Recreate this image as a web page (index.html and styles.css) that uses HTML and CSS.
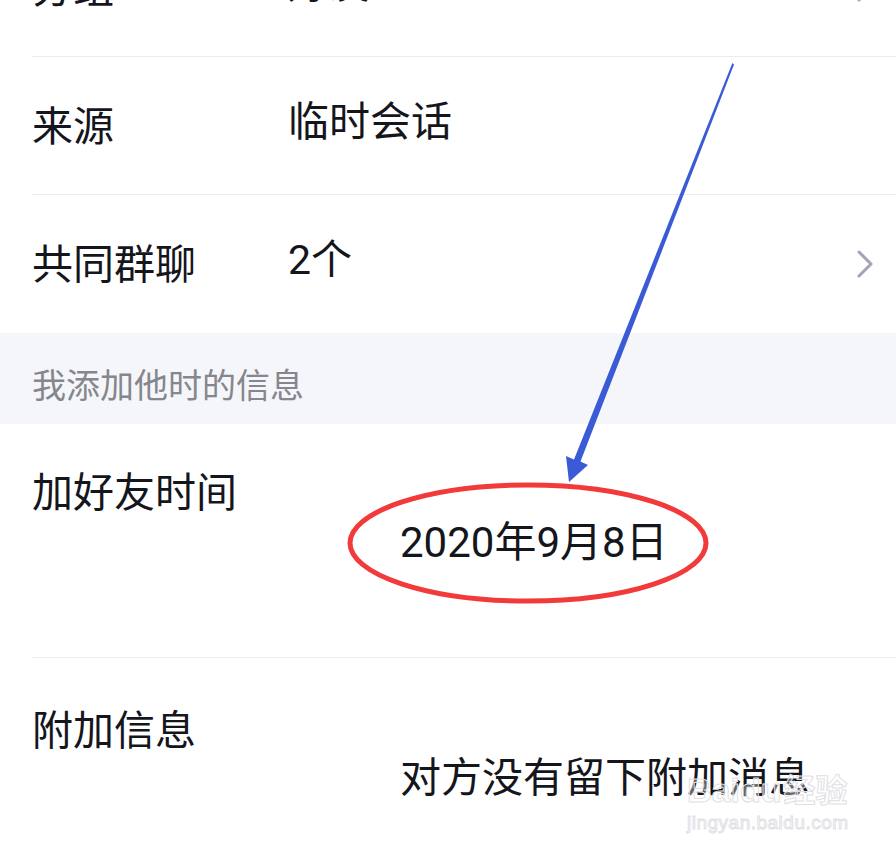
FILE: index.html
```html
<!DOCTYPE html>
<html lang="zh-CN">
<head>
<meta charset="utf-8">
<title>资料</title>
<link rel="stylesheet" href="styles.css">
</head>
<body>
<div class="page">
  <div class="list">
    <div class="row">
      <span class="label">分组</span>
      <span class="value">好友</span>
      <svg class="chev" viewBox="0 0 18 30"><path d="M3 3 L15 15 L3 27" /></svg>
    </div>
    <div class="row">
      <span class="label">来源</span>
      <span class="value">临时会话</span>
    </div>
    <div class="row">
      <span class="label">共同群聊</span>
      <span class="value">2个</span>
      <svg class="chev" viewBox="0 0 18 30"><path d="M3 3 L15 15 L3 27" /></svg>
    </div>
  </div>
  <div class="section">我添加他时的信息</div>
  <div class="list">
    <div class="row tall first">
      <div class="label">加好友时间</div>
      <div class="value wide date">2020年9月8日</div>
    </div>
    <div class="row tall second">
      <div class="label">附加信息</div>
      <div class="value wide msg">对方没有留下附加消息</div>
    </div>
  </div>

  <svg class="annot" viewBox="0 0 896 850" width="896" height="850">
    <ellipse cx="528" cy="543" rx="178" ry="58" fill="none" stroke="#f23a3a" stroke-width="5"/>
    <polygon fill="#3a5bd5" points="733,63.5 734,64.5 580.5,461.5 588,465 569,482 566,456 574,459.5 732.3,63.3"/>
  </svg>

  <div class="watermark">
    <div class="wm-logo">Bai<span class="paw">du</span><span class="wm-cn">经验</span></div>
    <div class="wm-url">jingyan.baidu.com</div>
  </div>
</div>
</body>
</html>
```

FILE: styles.css
```css
* { box-sizing: border-box; }
html, body {
  margin: 0;
  padding: 0;
  background: #ffffff;
}
body {
  width: 896px;
  height: 850px;
  overflow: hidden;
  font-family: "Roboto", "Noto Sans CJK SC", sans-serif;
  color: #15151c;
}
.page {
  position: relative;
  width: 896px;
  height: 850px;
  overflow: hidden;
}
.page > .list:first-child {
  margin-top: -81px;
}
.list {
  display: flex;
  flex-direction: column;
}
.row {
  position: relative;
  display: flex;
  align-items: center;
  height: 138px;
  margin-left: 32px;
  border-bottom: 1px solid #ebebed;
  font-size: 41px;
  line-height: 56px;
}
.row:last-child { border-bottom: none; }
.label {
  width: 256px;
  flex: none;
  margin-top: 2px;
}
.value {
  flex: 1;
  margin-top: -8px;
}
.chev {
  width: 18px;
  height: 30px;
  margin-right: 22px;
  flex: none;
}
.chev path {
  fill: none;
  stroke: #a3a3b8;
  stroke-width: 3;
  stroke-linecap: round;
  stroke-linejoin: round;
}
.section {
  height: 91px;
  background: #f5f6f9;
  padding-left: 32px;
  display: flex;
  align-items: center;
  font-size: 34px;
  color: #86868e;
  padding-top: 10px;
}
.row.tall {
  flex-direction: column;
  align-items: flex-start;
  height: auto;
}
.row.tall .label {
  margin-top: 0;
}
.row.first {
  height: 234px;
  padding-top: 41px;
  border-bottom: 1px solid #ebebed;
}
.row.second {
  height: 200px;
  padding-top: 45px;
}
.value.wide {
  margin-left: 368px;
  margin-top: 0;
}
.date {
  line-height: 44px;
  font-size: 42px;
}
.msg {
  line-height: 38px;
}
.annot {
  position: absolute;
  left: 0;
  top: 0;
  pointer-events: none;
}
.watermark {
  position: absolute;
  left: 687px;
  top: 768px;
  font-family: "Liberation Sans", "Noto Sans CJK SC", sans-serif;
  pointer-events: none;
  -webkit-text-stroke: 1px #e0e0e4;
}
.wm-logo {
  font-size: 34px;
  font-weight: bold;
  line-height: 40px;
  color: rgba(255,255,255,0.35);
}
.wm-cn {
  font-family: "Noto Sans CJK SC", sans-serif;
  font-size: 32px;
  margin-left: 2px;
}
.wm-url {
  font-size: 19px;
  line-height: 26px;
  color: rgba(255,255,255,0.35);
  letter-spacing: 0.5px;
}
```
